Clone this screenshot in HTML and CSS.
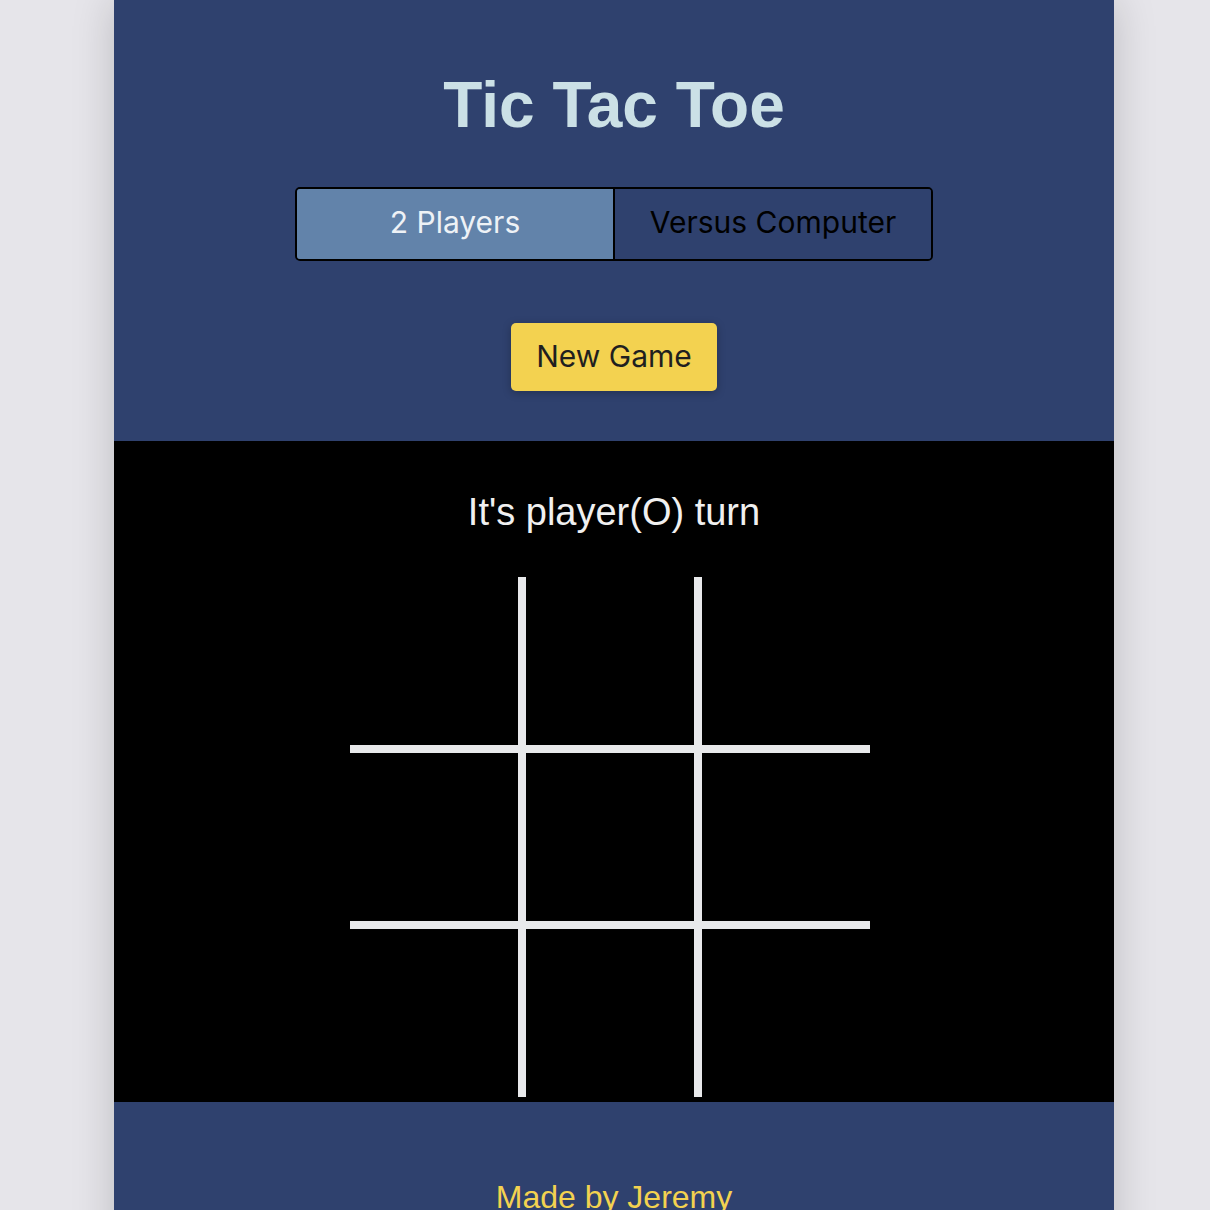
FILE: index.html
```html
<!DOCTYPE html>
<html lang="en">
<head>
<meta charset="utf-8">
<title>Tic Tac Toe</title>
<link rel="stylesheet" href="styles.css">
</head>
<body>
<div class="app">
  <header class="top">
    <h1 class="title">Tic Tac Toe</h1>
    <div class="modes">
      <button class="mode mode-active">2 Players</button>
      <button class="mode">Versus Computer</button>
    </div>
    <button class="new-game">New Game</button>
  </header>
  <main class="board-area">
    <p class="status">It's player(O) turn</p>
    <div class="board">
      <div class="cell"></div><div class="cell"></div><div class="cell"></div>
      <div class="cell"></div><div class="cell"></div><div class="cell"></div>
      <div class="cell"></div><div class="cell"></div><div class="cell"></div>
    </div>
  </main>
  <footer class="foot">
    <p class="credit">Made by Jeremy</p>
  </footer>
</div>
</body>
</html>
```
FILE: styles.css
```css
html, body {
  margin: 0;
  padding: 0;
}
body {
  background: #e6e5ea;
  font-family: "Liberation Sans", Arial, Helvetica, sans-serif;
  padding-left: 18px;
}
.app {
  width: 1000px;
  margin: 0 auto;
  background: #2f416e;
  box-shadow: 0 0 40px rgba(0, 0, 0, 0.18);
}
.top {
  display: flex;
  flex-direction: column;
  align-items: center;
  padding: 68px 0 50px;
}
.title {
  margin: 0;
  font-size: 64px;
  line-height: 74px;
  font-weight: 700;
  color: #cbe0e6;
}
.modes {
  margin-top: 45px;
  display: flex;
  width: 634px;
  border: 2px solid #000;
  border-radius: 5px;
  overflow: hidden;
}
.mode {
  flex: 1;
  height: 70px;
  padding: 0 0 4px;
  margin: 0;
  border: none;
  background: #2f416e;
  color: #000;
  font-family: Inter, "Liberation Sans", sans-serif;
  font-size: 30px;
  cursor: pointer;
}
.mode + .mode {
  border-left: 2px solid #000;
}
.mode-active {
  background: #6283aa;
  color: #eef2f6;
}
.new-game {
  margin-top: 62px;
  width: 206px;
  height: 68px;
  padding: 0 0 2px;
  border: none;
  border-radius: 5px;
  background: #f3d250;
  color: #1f1f1f;
  font-family: Inter, "Liberation Sans", sans-serif;
  font-size: 30px;
  box-shadow: 0 2px 8px rgba(0, 0, 0, 0.25);
  cursor: pointer;
}
.board-area {
  background: #000;
  display: flex;
  flex-direction: column;
  align-items: center;
  padding: 49px 0 5px;
}
.status {
  margin: 0;
  font-size: 38px;
  line-height: 44px;
  color: #f0f0f0;
}
.board {
  margin: 43px 8px 0 0;
  display: grid;
  grid-template-columns: repeat(3, 168px);
  grid-template-rows: repeat(3, 168px);
  gap: 8px;
  background: #e8e9eb;
}
.cell {
  background: #000;
}
.foot {
  display: flex;
  justify-content: center;
  padding: 77px 0 60px;
}
.credit {
  margin: 0;
  font-size: 32px;
  line-height: 37px;
  color: #f3d250;
}
```
